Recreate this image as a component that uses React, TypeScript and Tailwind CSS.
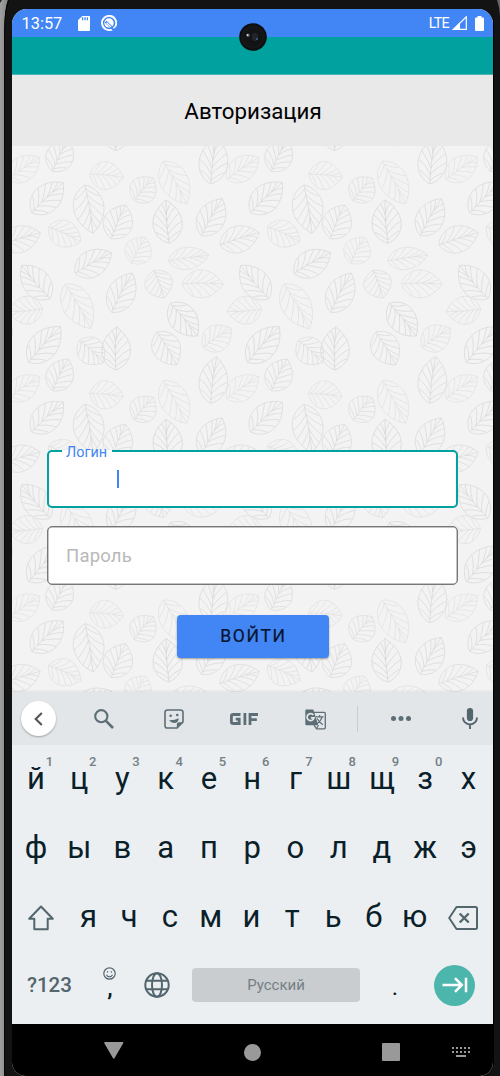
import React from "react";

const TILE_W = 218.95;
const TILE_H = 219.35;

// x1, y1 (tip), x2, y2 (stem), width, shade; in thirds of a pixel
const LEAVES: [number, number, number, number, number, string][] = [
  [119, 52, 24, 118, 76, "#e4e4e4"],
  [205, 657, 157, 752, 84, "#dddddd"],
  [370, 112, 269, 102, 86, "#e3e3e3"],
  [460, 114, 402, 182, 84, "#dfdfdf"],
  [560, 192, 490, 64, 86, "#e3e3e3"],
  [650, 650, 632, 790, 88, "#dbdbdb"],
  [190, 128, 95, 218, 84, "#dbdbdb"],
  [279, 280, 255, 135, 94, "#dbdbdb"],
  [377, 195, 334, 296, 90, "#dddddd"],
  [498, 180, 507, 310, 90, "#d9d9d9"],
  [667, 176, 604, 287, 84, "#dbdbdb"],
  [121, 278, 3, 315, 82, "#dedede"],
  [243, 305, 146, 260, 82, "#e2e2e2"],
  [437, 292, 395, 370, 84, "#e3e3e3"],
  [627, 346, 505, 363, 68, "#e1e1e1"],
  [335, 338, 225, 400, 82, "#dbdbdb"],
  [65, 376, 150, 476, 84, "#dbdbdb"],
  [272, 566, 196, 432, 90, "#e1e1e1"],
  [397, 399, 335, 517, 84, "#dbdbdb"],
  [492, 474, 462, 391, 86, "#dfdfdf"],
  [670, 432, 547, 431, 86, "#e1e1e1"],
  [592, 588, 511, 490, 84, "#d9d9d9"],
  [25, 515, 128, 507, 86, "#e1e1e1"],
  [694, 565, 609, 622, 82, "#e2e2e2"],
  [181, 560, 86, 667, 86, "#dadada"],
  [311, 668, 238, 601, 84, "#dedede"],
  [350, 561, 347, 690, 88, "#dadada"],
  [530, 675, 471, 576, 86, "#dddddd"],
];

const LEAF_PATH =
  "M0 0C16 -62 68 -68 100 0C68 68 16 62 0 0M0 0Q50 -6 100 0" +
  "M7 -1C18 -14 22 -26 27 -40M20 -2C34 -16 42 -30 49 -48M34 -3C48 -14 58 -28 68 -40M50 -3C63 -9 74 -20 82 -28M66 -3C78 -6 86 -12 92 -16" +
  "M7 -1C18 14 22 26 27 40M20 -2C34 14 42 28 49 48M34 -3C48 10 58 24 68 40M50 -3C63 5 74 16 82 28M66 -3C78 2 86 8 92 16";

function LeafBackground() {
  const tiles: [number, number][] = [];
  for (let r = -1; r < 3; r++) for (let c = -1; c < 3; c++) tiles.push([c, r]);
  return (
    <svg className="absolute inset-0 h-full w-full" viewBox="0 0 481 546" aria-hidden="true">
      <defs>
        <g id="leaf-tile">
          {LEAVES.map(([x1, y1, x2, y2, w, color], i) => {
            const ax = x2 / 3 - 12;
            const ay = y2 / 3 - 6;
            const dx = (x1 - x2) / 3;
            const dy = (y1 - y2) / 3;
            const len = Math.hypot(dx, dy);
            const angle = (Math.atan2(dy, dx) * 180) / Math.PI;
            return (
              <path
                key={i}
                d={LEAF_PATH}
                transform={`translate(${ax} ${ay}) rotate(${angle}) scale(${len / 100} ${w / 300})`}
                fill="none"
                stroke={color}
                strokeWidth="0.85"
                vectorEffect="non-scaling-stroke"
              />
            );
          })}
        </g>
      </defs>
      {tiles.map(([c, r]) => (
        <use key={`${c}:${r}`} href="#leaf-tile" x={c * TILE_W} y={r * TILE_H} />
      ))}
    </svg>
  );
}

function StatusBar() {
  return (
    <div className="flex h-7 shrink-0 items-center bg-[#4285f4] text-white">
      <span className="ml-[9.5px] mt-[3px] w-[41px] text-[16.4px] leading-none">13:57</span>
      <svg className="ml-[15px] h-[15px] w-3" viewBox="0 0 12 15">
        <path d="M4.3 0H11a1 1 0 0 1 1 1v13a1 1 0 0 1-1 1H1a1 1 0 0 1-1-1V4.3z" fill="#fff" />
        <path d="M4.6 1.3v3M7 1.3v3M9.4 1.3v3" stroke="#4285f4" strokeWidth="1.3" />
      </svg>
      <svg className="ml-[11.5px] h-4 w-4" viewBox="0 0 16 16" fill="none" stroke="#fff">
        <path d="M14.2 11.6A7.1 7.1 0 1 0 11.3 14.3" strokeWidth="1.9" />
        <circle cx="8" cy="8" r="4.7" fill="#fff" stroke="none" />
        <path d="M4.6 6.6L12.5 14.3" stroke="#4285f4" strokeWidth="2.6" />
        <path d="M5.5 7.7L10 12" strokeWidth="1.2" />
        <path d="M12.3 13.3L14.3 11.5" strokeWidth="1.5" />
      </svg>
      <span className="ml-auto mt-[2px] text-[14.4px] leading-none tracking-[-0.8px]">LTE</span>
      <svg className="ml-[3px] h-[14px] w-[15px]" viewBox="0 0 15 14">
        <path d="M14.3.8V13.3H1.5z" fill="none" stroke="#fff" strokeWidth="1.2" />
        <path d="M8 6.2V14H0z" fill="#fff" />
      </svg>
      <svg className="ml-2 mr-[9px] h-[15px] w-[9px]" viewBox="0 0 9 15">
        <path d="M2.5 0h4v1.5H8.2L9 2.3V14.3l-.8.7H.8L0 14.3V2.3l.8-.8h1.7z" fill="#fff" />
      </svg>
    </div>
  );
}

function Camera() {
  return (
    <svg className="absolute left-[239px] top-[23px] h-7 w-7" viewBox="0 0 28 28">
      <circle cx="14" cy="14" r="13.8" fill="#0c0d0e" />
      <circle cx="14" cy="14" r="12" fill="#151618" />
      <circle cx="14" cy="14" r="8.8" fill="#121315" />
      <ellipse cx="16" cy="14" rx="3.2" ry="4.2" fill="#22242c" />
      <circle cx="9" cy="12.3" r="1.7" fill="#5a5f68" />
      <circle cx="8.6" cy="12" r=".9" fill="#d8dde2" />
      <circle cx="18" cy="16" r=".9" fill="#3d6d9d" />
    </svg>
  );
}

function Toolbar() {
  return (
    <div className="flex h-[53px] shrink-0 items-center bg-[#e2e6e9] text-[#56676f]">
      <div className="ml-[9px] flex h-[35px] w-[35px] items-center justify-center rounded-full bg-white shadow-[0_1px_2px_rgba(0,0,0,0.3)]">
        <svg className="h-[14px] w-[9px]" viewBox="0 0 9 14" fill="none" stroke="#555" strokeWidth="2.1">
          <path d="M7.8 1L1.7 7l6.1 6" />
        </svg>
      </div>
      <svg className="ml-[38px] mt-px h-5 w-5" viewBox="0 0 20 20" fill="none" stroke="#5d6e76">
        <circle cx="7.3" cy="7.2" r="6.1" strokeWidth="2.1" />
        <path d="M11.7 11.7L19 19" strokeWidth="2.6" />
      </svg>
      <svg className="ml-[50px] h-5 w-5" viewBox="0 0 20 20">
        <path d="M3.3 1h13.4A2.3 2.3 0 0 1 19 3.3V13l-6 6H3.3A2.3 2.3 0 0 1 1 16.7V3.3A2.3 2.3 0 0 1 3.3 1z" fill="none" stroke="#5d6e76" strokeWidth="1.6" />
        <path d="M12.8 19.5v-4a2.2 2.2 0 0 1 2.2-2.2h4.5z" fill="#5d6e76" />
        <circle cx="6.7" cy="6.8" r="1.3" fill="#5d6e76" />
        <circle cx="13.3" cy="6" r="1.3" fill="#5d6e76" />
        <path d="M5 11.3Q10.5 11.6 14.8 9.2Q14.4 13.8 10.8 13.9Q7 14.2 5 11.3z" fill="#5d6e76" />
      </svg>
      <svg className="ml-[46px] h-3 w-7" viewBox="0 0 28 12" fill="none" stroke="#5d6e76" strokeWidth="2.8">
        <path d="M10.5 1.5H3.3Q1.4 1.5 1.4 3.3V8.7Q1.4 10.5 3.3 10.5H9.2V6.1H5.7M14.9 0V12M20 12V1.5H28M20 6.7H26.8" />
      </svg>
      <svg className="ml-[47px] mt-[2px] h-[21px] w-[21px]" viewBox="0 0 21 21">
        <path d="M8 3.3h11.2q1.1 0 1.1 1.1v14.4q0 1.1-1.1 1.1H11.5L9 16" fill="none" stroke="#5d6e76" strokeWidth="1.3" />
        <path d="M1.5.5H8.3L13.3 16.2H1.5Q.3 16.2.3 15V1.7Q.3.5 1.5.5z" fill="#5d6e76" />
        <path d="M8.4 6A3.5 3.5 0 1 0 9 8.9H5.9" fill="none" stroke="#e2e6e9" strokeWidth="1.7" />
        <path d="M11 7.8h7.5M14.6 6v1.8M17.2 8Q15.7 12.5 11.8 14.9M12.2 9.5Q13.8 13 17.8 15.8M11.5 19.5l2-3.3" fill="none" stroke="#5d6e76" strokeWidth="1.2" />
      </svg>
      <div className="ml-[31px] h-[26px] w-px bg-[#c7ccd0]" />
      <svg className="ml-[33px] h-[5px] w-5" viewBox="0 0 20 5" fill="#5d6e76">
        <circle cx="2.5" cy="2.5" r="2.5" />
        <circle cx="10" cy="2.5" r="2.5" />
        <circle cx="17.5" cy="2.5" r="2.5" />
      </svg>
      <svg className="ml-[51px] h-[21px] w-4" viewBox="0 0 16 21">
        <rect x="4.9" y="0" width="6.2" height="13" rx="3.1" fill="#53656d" />
        <path d="M1 9.5a7 7 0 0 0 14 0M8 16.5V21" fill="none" stroke="#53656d" strokeWidth="1.9" />
      </svg>
    </div>
  );
}

const ROW1 = ["й", "ц", "у", "к", "е", "н", "г", "ш", "щ", "з", "х"];
const ROW2 = ["ф", "ы", "в", "а", "п", "р", "о", "л", "д", "ж", "э"];
const ROW3 = ["я", "ч", "с", "м", "и", "т", "ь", "б", "ю"];
const HINTS = ["1", "2", "3", "4", "5", "6", "7", "8", "9", "0", ""];

function Keyboard() {
  return (
    <div className="h-[279px] shrink-0 bg-[#ebeff2] text-[#0a2029]">
      <div className="grid h-[69px] grid-cols-11 pl-[2.3px] pr-[2.9px] text-[31px] leading-[68px]">
        {ROW1.map((k, i) => (
          <div key={k} className="relative text-center">
            {k}
            <span className="absolute left-[31.4px] top-[10px] text-[13px] font-medium leading-none text-[#748086]">{HINTS[i]}</span>
          </div>
        ))}
      </div>
      <div className="grid h-[69px] grid-cols-11 pl-[2.3px] pr-[2.9px] text-[31px] leading-[68px]">
        {ROW2.map((k) => (
          <div key={k} className="text-center">{k}</div>
        ))}
      </div>
      <div className="flex h-[69px] items-center text-[31px] leading-[68px]">
        <svg className="ml-4 h-[26px] w-[26px]" viewBox="0 0 26 26" fill="none" stroke="#53656d" strokeWidth="2" strokeLinejoin="round">
          <path d="M13 1.5L1.2 13.8H6.3V24.2H19.7V13.8H24.8z" />
        </svg>
        <div className="ml-[14px] grid h-[69px] w-[367px] grid-cols-9">
          {ROW3.map((k) => (
            <div key={k} className="text-center">{k}</div>
          ))}
        </div>
        <svg className="ml-[13px] mt-px h-6 w-[30px]" viewBox="0 0 30 24" fill="none" stroke="#53656d" strokeWidth="2" strokeLinejoin="round">
          <path d="M8.5 1H27.5Q29 1 29 2.5V21.5Q29 23 27.5 23H8.5L1.2 12z" />
          <path d="M11.7 7.5l9 9M20.7 7.5l-9 9" strokeWidth="2.4" />
        </svg>
      </div>
      <div className="flex h-[66px] items-center">
        <span className="ml-[15px] w-[46px] text-[20.5px] font-medium leading-none text-[#53656d]">?123</span>
        <div className="ml-[28px] flex w-4 flex-col items-center pb-[3px]">
          <svg className="h-[13px] w-[13px]" viewBox="0 0 13 13" fill="none" stroke="#53656d">
            <circle cx="6.5" cy="6.5" r="5.7" strokeWidth="1.2" />
            <path d="M3.5 7.8a3.2 3.2 0 0 0 6 0" strokeWidth="1.1" />
            <circle cx="4.6" cy="4.9" r=".4" />
            <circle cx="8.4" cy="4.9" r=".4" />
          </svg>
          <span className="-mt-[4px] pl-[2px] text-2xl font-medium leading-6">,</span>
        </div>
        <svg className="ml-[27px] h-[26px] w-[26px]" viewBox="0 0 26 26" fill="none" stroke="#53656d" strokeWidth="2">
          <circle cx="13" cy="13" r="11.7" />
          <ellipse cx="13" cy="13" rx="5" ry="11.7" />
          <path d="M2.3 8.8H23.7M2.3 17.2H23.7" />
        </svg>
        <div className="ml-[22px] flex h-[34px] w-[168px] items-center justify-center rounded-[4px] bg-[#c9cdcf] text-[15px] text-[#748086]">
          <span className="leading-none">Русский</span>
        </div>
        <span className="ml-[31px] mt-[4px] w-2 text-center text-2xl leading-none">.</span>
        <div className="ml-[35px] flex h-[41px] w-[41px] items-center justify-center rounded-full bg-[#4db6ac]">
          <svg className="h-4 w-[26px]" viewBox="0 0 26 16" fill="none" stroke="#fff" strokeWidth="2.5">
            <path d="M.5 8H19.5M13 1.2L19.8 8L13 14.8M24 .8V15.2" />
          </svg>
        </div>
      </div>
    </div>
  );
}

function NavBar() {
  const dots = [1, 5, 9, 13, 17];
  return (
    <div className="flex h-[52px] shrink-0 items-center bg-black pt-1">
      <svg className="mb-[3px] ml-[92px] h-[17px] w-5" viewBox="0 0 20 17">
        <path d="M.8 0H18.7Q19.8.3 19.2 1.2L10.3 16.5H9.2L.3 1.2Q0 .2.8 0z" fill="#999" />
      </svg>
      <div className="ml-[120px] h-[17px] w-[17px] rounded-full bg-[#999]" />
      <div className="ml-[121px] h-[18px] w-[18px] rounded-[1px] bg-[#999]" />
      <svg className="ml-[52px] h-[10px] w-[18px]" viewBox="0 0 18 10" fill="#999">
        {dots.map((x) => (
          <React.Fragment key={x}>
            <rect x={x - 1} y="0" width="2" height="2" />
            <rect x={x - 1} y="4" width="2" height="2" />
          </React.Fragment>
        ))}
        <rect x="4" y="8" width="10" height="2" />
      </svg>
    </div>
  );
}

export default function App() {
  return (
    <div className="relative h-[1076px] w-[500px] overflow-hidden bg-[#131313] pl-3 pt-[9px] font-['Roboto',sans-serif]">
      <svg className="absolute inset-0 h-full w-full" viewBox="0 0 500 1076">
        <defs>
          <linearGradient id="metal" x1="0" x2="1">
            <stop offset="0" stopColor="#a0a0a0" />
            <stop offset="1" stopColor="#858585" />
          </linearGradient>
        </defs>
        <path d="M0 0H8Q4.5 8 4.2 30V1076H0z" fill="url(#metal)" />
        <path d="M0 0H2L0 3z" fill="#222" />
        <path d="M4.6 1076V30Q5 10 8.5 0" fill="none" stroke="#050505" />
        <path d="M497 0Q499.5 7 500 16V0z" fill="#666" />
        <path d="M493.5 20V1066" stroke="#000" />
      </svg>
      <div className="relative flex h-[1067px] w-[481px] flex-col overflow-hidden rounded-b-[14px] rounded-t-[15px] bg-[#f3f3f3]">
        <StatusBar />
        <div className="h-[38px] shrink-0 border-b border-[#45b7b4] bg-[#00a19f]" />
        <div className="flex h-[71px] shrink-0 items-center justify-center bg-[#e9e9e9] pl-px pt-[2px] text-[22.3px] text-black">
          <h1>Авторизация</h1>
        </div>
        <main className="relative h-[546px] shrink-0 bg-[#f3f3f3]">
          <LeafBackground />
          <form className="relative flex flex-col px-[35px] pt-[304px]" onSubmit={(e) => e.preventDefault()}>
            <div className="relative h-[58px] w-[411px] rounded-[5px] border-2 border-[#00a19f] bg-white">
              <div className="absolute -top-[2px] left-[12.5px] h-[2px] w-[50px] bg-white" />
              <span className="absolute left-[17px] top-[-7px] text-[14.4px] leading-4 text-[#4285f4]">Логин</span>
              <span className="ml-[68px] mt-[18px] block h-[18px] w-[2px] bg-[#4285f4]" />
            </div>
            <div className="mt-[18px] flex h-[59px] w-[411px] items-center rounded-[5px] border border-[#777] bg-white pl-[18px] pt-[3px] text-[18.5px] tracking-[0.2px] text-[#b9b9b9] shadow-[inset_0_0_0_0.5px_#888]">
              Пароль
            </div>
            <button className="ml-[130px] mt-[30px] h-[43px] w-[152px] rounded-[4px] bg-[#4285f4] pl-px text-[17.5px] tracking-[1.6px] text-[#07142b] shadow-[0_1px_2px_rgba(0,0,0,0.35)] [-webkit-text-stroke:0.2px_#07142b]">ВОЙТИ</button>
          </form>
          <div className="absolute bottom-0 h-[3px] w-full bg-gradient-to-b from-transparent to-black/5" />
        </main>
        <Toolbar />
        <Keyboard />
        <NavBar />
      </div>
      <Camera />
    </div>
  );
}
